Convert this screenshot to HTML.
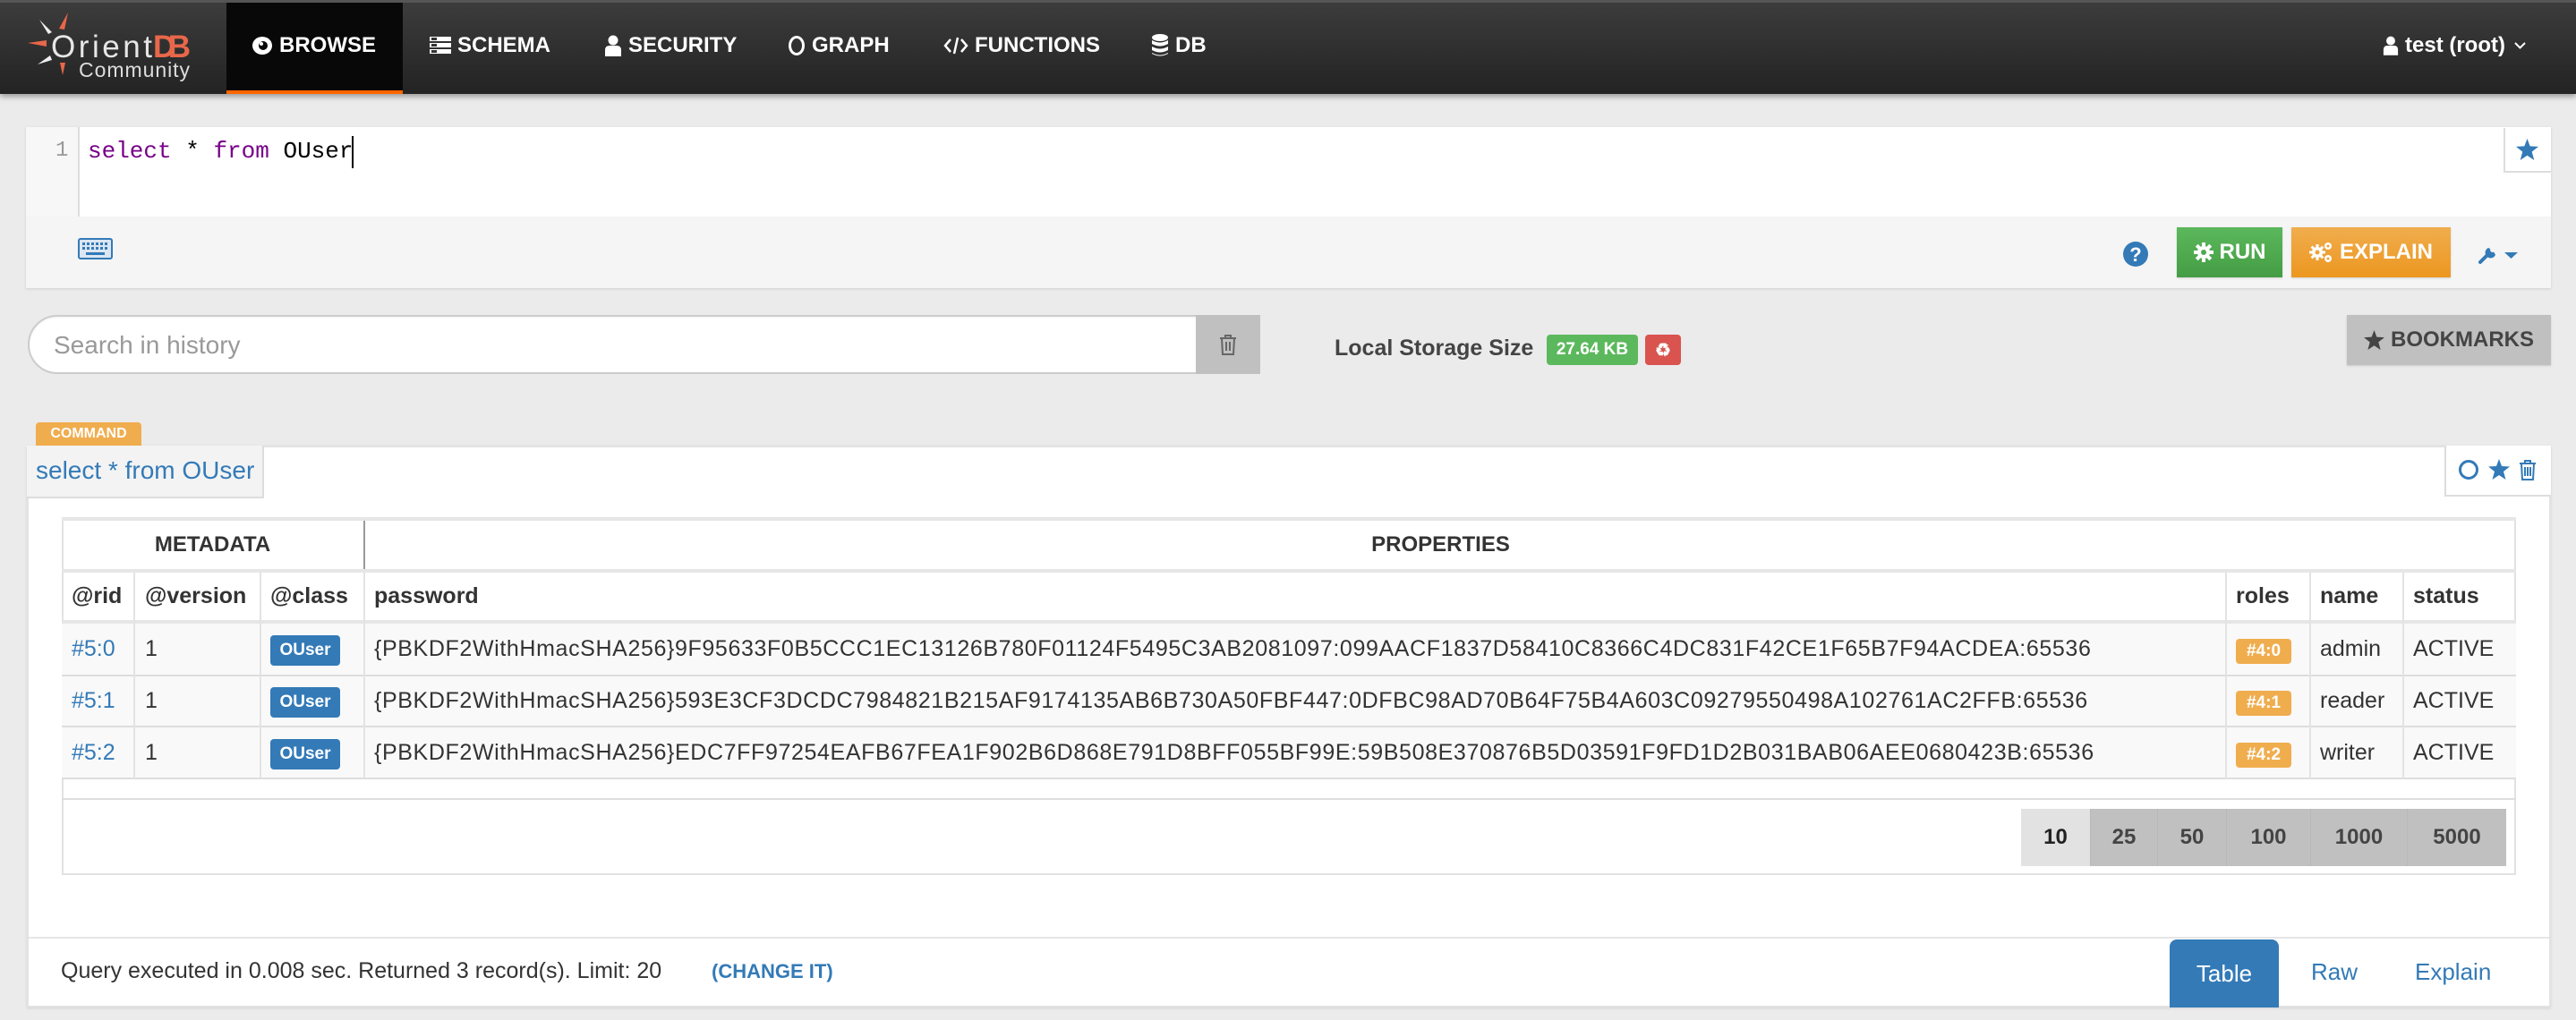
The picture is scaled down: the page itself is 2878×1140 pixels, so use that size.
<!DOCTYPE html>
<html><head><meta charset="utf-8"><style>
*{box-sizing:border-box;margin:0;padding:0}
body{width:2878px;height:1140px;overflow:hidden;background:#ebebeb;font-family:"Liberation Sans",sans-serif;position:relative;color:#333}
.a{position:absolute}
.nav{left:0;top:0;width:2878px;height:105px;background:linear-gradient(#3c3c3c,#232323);border-top:3px solid #555;box-shadow:0 3px 6px rgba(0,0,0,.35)}
.ni{position:absolute;top:0;height:102px;display:flex;align-items:center;color:#fff;font-weight:bold;font-size:24px;white-space:nowrap}
.ni svg{margin-right:7px}
.th{font-weight:bold;font-size:24px;color:#333}
.cell{position:absolute;font-size:25px;color:#333;display:flex;align-items:center}
.pw{letter-spacing:0.62px}
.vl{position:absolute;width:2px;background:#e3e3e3}
.hl{position:absolute;height:3px;background:#e6e6e6;left:69px;width:2742px}
.badge{position:absolute;color:#fff;font-weight:bold;font-size:19px;border-radius:4px;display:flex;align-items:center;justify-content:center}
.pg{position:absolute;top:904px;height:64px;display:flex;align-items:center;justify-content:center;font-weight:bold;font-size:24px;color:#444;background:#c0c0c0;border-right:1px solid #b8b8b8}
</style></head><body>

<div class="a nav"></div>
<!-- logo -->
<svg class="a" style="left:0;top:0" width="240" height="105" viewBox="0 0 240 105">
<path d="M76 14 L66 32 L72 33 Z" fill="#e8674a"/>
<path d="M44 22 L58 36 L54 38 Z" fill="#eee"/>
<path d="M31 48 L52 45 L52 52 Z" fill="#e8674a"/>
<path d="M42 72 L56 62 L58 67 Z" fill="#eee"/>
<path d="M70 84 L67 70 L73 70 Z" fill="#e8674a"/>
<text x="57" y="64" font-family="Liberation Sans" font-size="35" fill="#e6e6e6" textLength="113">Orient</text>
<text x="171" y="64" font-family="Liberation Sans" font-size="35" font-weight="bold" fill="#e8674a" textLength="42">DB</text>
<text x="88" y="86" font-family="Liberation Sans" font-size="23" fill="#ddd" textLength="124">Community</text>
</svg>
<div class="a" style="left:253px;top:3px;width:197px;height:102px;background:#080808"></div>
<div class="a" style="left:253px;top:101px;width:197px;height:4px;background:#f60"></div>
<div class="ni" style="left:281px"><svg width="24" height="24" viewBox="0 0 24 24"><ellipse cx="12" cy="12" rx="11" ry="10" fill="#fff"/><circle cx="13" cy="12" r="5" fill="#080808"/><circle cx="11" cy="10" r="2" fill="#fff"/></svg>BROWSE</div>
<div class="ni" style="left:480px"><svg width="24" height="24" viewBox="0 0 24 24" fill="#fff"><rect x="0" y="2" width="24" height="5"/><rect x="0" y="9" width="24" height="5"/><rect x="0" y="16" width="24" height="5"/><rect x="2" y="3" width="6" height="3" fill="#333"/><rect x="2" y="10" width="6" height="3" fill="#333"/><rect x="2" y="17" width="6" height="3" fill="#333"/></svg>SCHEMA</div>
<div class="ni" style="left:675px"><svg width="20" height="24" viewBox="0 0 20 24" fill="#fff"><circle cx="10" cy="6" r="5.5"/><path d="M1 24 V17 Q1 12 6 12 H14 Q19 12 19 17 V24 Z"/></svg>SECURITY</div>
<div class="ni" style="left:880px"><svg width="20" height="24" viewBox="0 0 20 24"><ellipse cx="10" cy="12" rx="7.5" ry="9.5" fill="none" stroke="#fff" stroke-width="3"/></svg>GRAPH</div>
<div class="ni" style="left:1054px"><svg width="28" height="24" viewBox="0 0 28 24" fill="none" stroke="#fff" stroke-width="2.5"><path d="M8 5 L2 12 L8 19"/><path d="M20 5 L26 12 L20 19"/><path d="M16 3 L12 21"/></svg>FUNCTIONS</div>
<div class="ni" style="left:1286px"><svg width="20" height="26" viewBox="0 0 20 26" fill="#fff"><ellipse cx="10" cy="4" rx="9" ry="4"/><path d="M1 7 Q10 12 19 7 V11 Q10 16 1 11Z"/><path d="M1 14 Q10 19 19 14 V18 Q10 23 1 18Z"/><path d="M1 21 Q10 26 19 21 V22 Q10 27 1 22Z"/></svg>DB</div>
<div class="ni" style="left:2662px;font-size:24px"><svg width="18" height="22" viewBox="0 0 20 24" fill="#fff"><circle cx="10" cy="6" r="5.5"/><path d="M1 24 V17 Q1 12 6 12 H14 Q19 12 19 17 V24 Z"/></svg>test (root)<svg style="margin-left:10px" width="13" height="8" viewBox="0 0 13 8"><path d="M1 1 L6.5 6.5 L12 1" fill="none" stroke="#fff" stroke-width="2"/></svg></div>

<!-- editor panel -->
<div class="a" style="left:29px;top:142px;width:2821px;height:180px;background:#f5f5f5;box-shadow:0 1px 3px rgba(0,0,0,.12)"></div>
<div class="a" style="left:29px;top:142px;width:2821px;height:100px;background:#fff"></div>
<div class="a" style="left:29px;top:142px;width:60px;height:100px;background:#f7f7f7;border-right:2px solid #ddd"></div>
<div class="a" style="left:62px;top:155px;font-family:'Liberation Mono',monospace;font-size:24px;color:#999">1</div>
<div class="a" style="left:98px;top:154px;font-family:'Liberation Mono',monospace;font-size:26px;color:#000;white-space:pre"><span style="color:#708">select</span> * <span style="color:#708">from</span> OUser</div>
<div class="a" style="left:393px;top:152px;width:2px;height:36px;background:#000"></div>
<div class="a" style="left:2797px;top:143px;width:53px;height:50px;background:#fff;border:2px solid #ddd;border-right:none;border-top:none"></div>
<svg class="a" style="left:2811px;top:155px" width="25" height="24" viewBox="0 0 24 23"><path d="M12 0 L15 8 L24 8.5 L17 14 L19.5 23 L12 18 L4.5 23 L7 14 L0 8.5 L9 8Z" fill="#337ab7"/></svg>
<svg class="a" style="left:87px;top:266px" width="39" height="24" viewBox="0 0 39 24"><rect x="1" y="1" width="37" height="22" rx="2" fill="#dbe6f2" stroke="#337ab7" stroke-width="2"/><g fill="#337ab7"><rect x="5" y="5" width="3" height="3"/><rect x="10" y="5" width="3" height="3"/><rect x="15" y="5" width="3" height="3"/><rect x="20" y="5" width="3" height="3"/><rect x="25" y="5" width="3" height="3"/><rect x="30" y="5" width="3" height="3"/><rect x="5" y="10" width="3" height="3"/><rect x="10" y="10" width="3" height="3"/><rect x="15" y="10" width="3" height="3"/><rect x="20" y="10" width="3" height="3"/><rect x="25" y="10" width="3" height="3"/><rect x="30" y="10" width="3" height="3"/><rect x="9" y="16" width="21" height="3"/></g></svg>
<svg class="a" style="left:2372px;top:270px" width="28" height="28" viewBox="0 0 28 28"><circle cx="14" cy="14" r="14" fill="#337ab7"/><text x="14" y="22" text-anchor="middle" font-family="Liberation Sans" font-weight="bold" font-size="22" fill="#fff">?</text></svg>
<div class="a" style="left:2432px;top:254px;width:118px;height:56px;background:linear-gradient(#5cb85c,#449d44);color:#fff;font-weight:bold;font-size:24px;display:flex;align-items:center;justify-content:center;box-shadow:0 1px 2px rgba(0,0,0,.15)"><svg width="22" height="22" viewBox="0 0 22 22" style="margin-right:7px"><g fill="#fff"><circle cx="11" cy="11" r="7"/><rect x="9" y="0" width="4" height="22"/><rect x="0" y="9" width="22" height="4"/><rect x="9" y="0" width="4" height="22" transform="rotate(45 11 11)"/><rect x="9" y="0" width="4" height="22" transform="rotate(-45 11 11)"/></g><circle cx="11" cy="11" r="3" fill="#50a850"/></svg>RUN</div>
<div class="a" style="left:2560px;top:254px;width:178px;height:56px;background:linear-gradient(#f0ad4e,#ec971f);color:#fff;font-weight:bold;font-size:24px;display:flex;align-items:center;justify-content:center;box-shadow:0 1px 2px rgba(0,0,0,.15)"><svg width="27" height="26" viewBox="0 0 27 26" style="margin-right:7px"><g fill="#fff"><circle cx="9" cy="13" r="6"/><rect x="7.5" y="4" width="3" height="18"/><rect x="0" y="11.5" width="18" height="3"/><rect x="7.5" y="4" width="3" height="18" transform="rotate(45 9 13)"/><rect x="7.5" y="4" width="3" height="18" transform="rotate(-45 9 13)"/><circle cx="21" cy="6" r="4"/><circle cx="21" cy="20" r="4"/></g><circle cx="9" cy="13" r="2.5" fill="#eea23a"/><circle cx="21" cy="6" r="1.5" fill="#eea23a"/><circle cx="21" cy="20" r="1.5" fill="#eea23a"/></svg>EXPLAIN</div>
<svg class="a" style="left:2768px;top:272px" width="48" height="24" viewBox="0 0 48 24"><path d="M3 21 L13 11" stroke="#337ab7" stroke-width="4" stroke-linecap="round"/><path d="M12 5 A6 6 0 1 0 20 13 L18 9 L16 7Z" fill="#337ab7"/><circle cx="17" cy="7" r="3" fill="#f5f5f5"/><path d="M30 10 L45 10 L37.5 17Z" fill="#337ab7"/></svg>

<!-- search row -->
<div class="a" style="left:31px;top:352px;width:1310px;height:66px;background:#fff;border:2px solid #ccc;border-radius:33px 0 0 33px;box-shadow:inset 0 1px 2px rgba(0,0,0,.06)"></div>
<div class="a" style="left:60px;top:370px;font-size:28px;color:#999">Search in history</div>
<div class="a" style="left:1336px;top:352px;width:72px;height:66px;background:#c0c0c0"></div>
<svg class="a" style="left:1362px;top:373px" width="20" height="24" viewBox="0 0 20 24" fill="none" stroke="#666" stroke-width="2"><path d="M1 5 H19 M7 5 V2 H13 V5 M3 5 L4 23 H16 L17 5 M8 9 V19 M12 9 V19"/></svg>
<div class="a" style="left:1491px;top:375px;font-size:25px;font-weight:bold;color:#444">Local Storage Size</div>
<div class="badge" style="left:1728px;top:374px;width:102px;height:34px;background:#5cb85c;font-size:19px">27.64 KB</div>
<div class="badge" style="left:1838px;top:374px;width:40px;height:34px;background:#d9534f;font-size:20px">♻</div>
<div class="a" style="left:2622px;top:352px;width:228px;height:56px;background:#c0c0c0;color:#444;font-weight:bold;font-size:24px;display:flex;align-items:center;justify-content:center;box-shadow:0 1px 2px rgba(0,0,0,.15)"><svg width="23" height="22" viewBox="0 0 24 23" style="margin-right:7px"><path d="M12 0 L15 8 L24 8.5 L17 14 L19.5 23 L12 18 L4.5 23 L7 14 L0 8.5 L9 8Z" fill="#444"/></svg>BOOKMARKS</div>

<!-- result panel -->
<div class="a" style="left:40px;top:472px;width:118px;height:26px;background:#f0ad4e;border-radius:4px 4px 0 0;color:#fff;font-weight:bold;font-size:16px;display:flex;align-items:center;justify-content:center">COMMAND</div>
<div class="a" style="left:30px;top:498px;width:2820px;height:628px;background:#fff;border:2px solid #e2e2e2;box-shadow:0 1px 3px rgba(0,0,0,.1)"></div>
<div class="a" style="left:30px;top:498px;width:265px;height:59px;background:#f3f3f3;border:2px solid #ddd;border-top:none;border-left:none"></div>
<div class="a" style="left:40px;top:510px;font-size:28px;color:#337ab7">select * from OUser</div>
<div class="a" style="left:2731px;top:498px;width:119px;height:57px;background:#fff;border:2px solid #ddd;border-top:none;border-right:none"></div>
<svg class="a" style="left:2747px;top:513px" width="90" height="24" viewBox="0 0 90 24"><circle cx="11" cy="12" r="9.5" fill="none" stroke="#337ab7" stroke-width="3"/><path d="M45 0 L48 8 L57 8.5 L50 14 L52.5 23 L45 18 L37.5 23 L40 14 L33 8.5 L42 8Z" fill="#337ab7"/><path d="M68 5 H86 M74 5 V2 H80 V5 M70 5 L71 23 H83 L84 5 M74 9 V19 M77 9 V19 M80 9 V19" fill="none" stroke="#337ab7" stroke-width="2"/></svg>

<!-- table -->
<div class="a" style="left:69px;top:578px;width:2742px;height:400px;border:2px solid #e2e2e2;background:#fff"></div>
<div class="hl" style="top:578px;height:4px"></div>
<div class="hl" style="top:636px;height:4px"></div>
<div class="hl" style="top:693px;height:4px"></div>
<div class="a" style="left:69px;top:697px;width:2742px;height:173px;background:#f9f9f9"></div>
<div class="hl" style="top:754px;height:2px;background:#ddd"></div>
<div class="hl" style="top:811px;height:2px;background:#ddd"></div>
<div class="hl" style="top:869px;height:2px;background:#ddd"></div>
<div class="a" style="left:406px;top:582px;width:2px;height:54px;background:#999"></div>
<div class="vl" style="left:149px;top:640px;height:230px"></div>
<div class="vl" style="left:290px;top:640px;height:230px"></div>
<div class="vl" style="left:406px;top:640px;height:230px"></div>
<div class="vl" style="left:2486px;top:640px;height:230px"></div>
<div class="vl" style="left:2580px;top:640px;height:230px"></div>
<div class="vl" style="left:2684px;top:640px;height:230px"></div>
<div class="a th" style="left:69px;top:582px;width:337px;height:54px;display:flex;align-items:center;justify-content:center">METADATA</div>
<div class="a th" style="left:408px;top:582px;width:2403px;height:54px;display:flex;align-items:center;justify-content:center">PROPERTIES</div>
<div class="cell th" style="left:80px;top:640px;height:53px">@rid</div>
<div class="cell th" style="left:162px;top:640px;height:53px">@version</div>
<div class="cell th" style="left:302px;top:640px;height:53px">@class</div>
<div class="cell th" style="left:418px;top:640px;height:53px">password</div>
<div class="cell th" style="left:2498px;top:640px;height:53px">roles</div>
<div class="cell th" style="left:2592px;top:640px;height:53px">name</div>
<div class="cell th" style="left:2696px;top:640px;height:53px">status</div>

<div class="cell" style="left:80px;top:697px;height:57px;color:#337ab7">#5:0</div>
<div class="cell" style="left:162px;top:697px;height:57px">1</div>
<div class="badge" style="left:302px;top:710px;width:78px;height:34px;background:#337ab7">OUser</div>
<div class="cell pw" style="left:418px;top:697px;height:57px;white-space:nowrap">{PBKDF2WithHmacSHA256}9F95633F0B5CCC1EC13126B780F01124F5495C3AB2081097:099AACF1837D58410C8366C4DC831F42CE1F65B7F94ACDEA:65536</div>
<div class="badge" style="left:2498px;top:714px;width:62px;height:28px;background:#f0ad4e">#4:0</div>
<div class="cell" style="left:2592px;top:697px;height:57px">admin</div>
<div class="cell" style="left:2696px;top:697px;height:57px">ACTIVE</div>

<div class="cell" style="left:80px;top:756px;height:55px;color:#337ab7">#5:1</div>
<div class="cell" style="left:162px;top:756px;height:55px">1</div>
<div class="badge" style="left:302px;top:768px;width:78px;height:34px;background:#337ab7">OUser</div>
<div class="cell pw" style="left:418px;top:756px;height:55px;white-space:nowrap">{PBKDF2WithHmacSHA256}593E3CF3DCDC7984821B215AF9174135AB6B730A50FBF447:0DFBC98AD70B64F75B4A603C09279550498A102761AC2FFB:65536</div>
<div class="badge" style="left:2498px;top:772px;width:62px;height:28px;background:#f0ad4e">#4:1</div>
<div class="cell" style="left:2592px;top:756px;height:55px">reader</div>
<div class="cell" style="left:2696px;top:756px;height:55px">ACTIVE</div>

<div class="cell" style="left:80px;top:813px;height:56px;color:#337ab7">#5:2</div>
<div class="cell" style="left:162px;top:813px;height:56px">1</div>
<div class="badge" style="left:302px;top:826px;width:78px;height:34px;background:#337ab7">OUser</div>
<div class="cell pw" style="left:418px;top:813px;height:56px;white-space:nowrap">{PBKDF2WithHmacSHA256}EDC7FF97254EAFB67FEA1F902B6D868E791D8BFF055BF99E:59B508E370876B5D03591F9FD1D2B031BAB06AEE0680423B:65536</div>
<div class="badge" style="left:2498px;top:830px;width:62px;height:28px;background:#f0ad4e">#4:2</div>
<div class="cell" style="left:2592px;top:813px;height:56px">writer</div>
<div class="cell" style="left:2696px;top:813px;height:56px">ACTIVE</div>

<div class="hl" style="top:892px;height:2px;background:#ddd"></div>
<div class="pg" style="left:2258px;width:78px;background:#e2e2e2;color:#222">10</div>
<div class="pg" style="left:2336px;width:75px">25</div>
<div class="pg" style="left:2411px;width:77px">50</div>
<div class="pg" style="left:2488px;width:94px">100</div>
<div class="pg" style="left:2582px;width:108px">1000</div>
<div class="pg" style="left:2690px;width:110px;border-right:none">5000</div>

<!-- footer -->
<div class="a" style="left:32px;top:1047px;width:2816px;height:2px;background:#e6e6e6"></div>
<div class="a" style="left:68px;top:1071px;font-size:25px;color:#333">Query executed in 0.008 sec. Returned 3 record(s). Limit: 20</div>
<div class="a" style="left:795px;top:1073px;font-size:22px;font-weight:bold;color:#337ab7">(CHANGE IT)</div>
<div class="a" style="left:2424px;top:1050px;width:122px;height:76px;background:#337ab7;border-radius:8px 8px 0 0;color:#fff;font-size:26px;display:flex;align-items:center;justify-content:center">Table</div>
<div class="a" style="left:2582px;top:1071px;font-size:26px;color:#337ab7">Raw</div>
<div class="a" style="left:2698px;top:1071px;font-size:26px;color:#337ab7">Explain</div>
</body></html>
